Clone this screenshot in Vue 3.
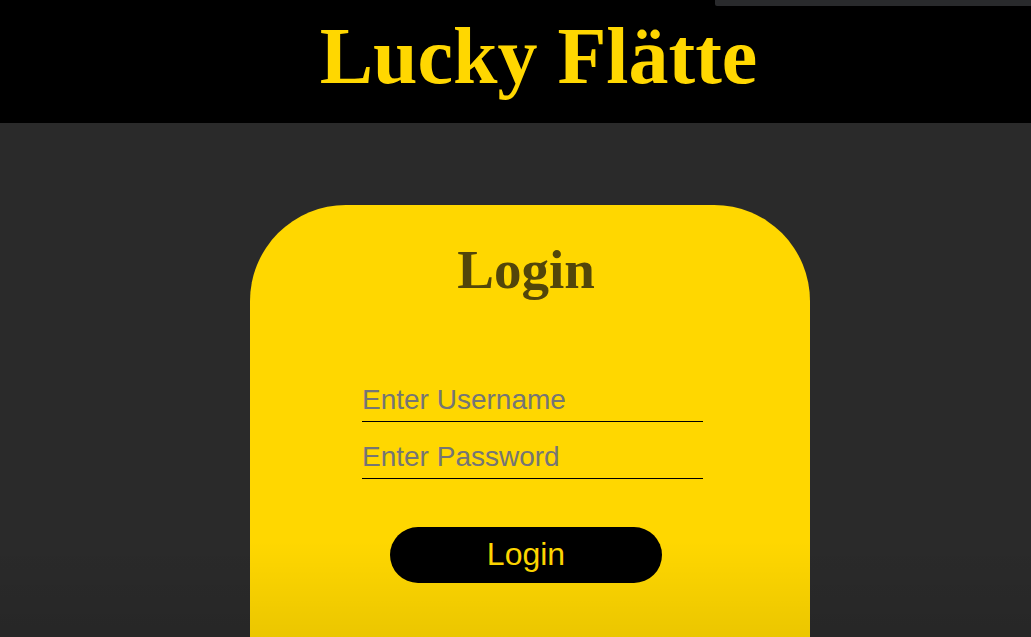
<script setup>
import { ref } from 'vue'

const username = ref('')
const password = ref('')
</script>

<template>
  <div class="page">
    <header class="banner">
      <h1>Lucky Flätte</h1>
      <div class="strip"></div>
    </header>
    <main>
      <form class="card" @submit.prevent>
        <h2>Login</h2>
        <div class="fields">
          <input v-model="username" type="text" placeholder="Enter Username" aria-label="Username" />
          <input v-model="password" type="password" placeholder="Enter Password" aria-label="Password" />
        </div>
        <button type="submit">Login</button>
      </form>
    </main>
    <div class="shade"></div>
  </div>
</template>

<style>
html,
body,
#app {
  height: 100%;
}

body {
  margin: 0;
  overflow: hidden;
  background: #2a2a2a;
}
</style>

<style scoped>
.page {
  position: relative;
  display: flex;
  flex-direction: column;
  height: 100%;
  overflow: hidden;
  background: #2a2a2a;
}

.banner {
  position: relative;
  flex: none;
  box-sizing: border-box;
  padding: 10px 0 21px 46px;
  background: #000;
}

.strip {
  position: absolute;
  top: 0;
  right: 0;
  width: 316px;
  height: 6px;
  background: #292a2c;
  border-bottom-left-radius: 2px;
}

h1,
h2 {
  margin: 0;
  font-family: "Liberation Serif", "Times New Roman", serif;
  font-weight: bold;
  text-align: center;
}

h1 {
  color: #ffd700;
  font-size: 80px;
  line-height: 92px;
}

main {
  display: flex;
  flex: 1;
  justify-content: center;
  padding: 82px 0 0 29px;
}

.card {
  display: flex;
  flex: none;
  flex-direction: column;
  align-items: center;
  box-sizing: border-box;
  width: 560px;
  min-height: 560px;
  padding: 33px 8px 0 0;
  border-radius: 96px;
  background: #ffd700;
}

h2 {
  color: #52460a;
  font-size: 55px;
  line-height: 64px;
}

.fields {
  display: flex;
  flex-direction: column;
  gap: 16px;
  width: 341px;
  margin: 79px 0 48px 13px;
}

input {
  box-sizing: border-box;
  width: 100%;
  height: 41px;
  padding: 0 0 2px;
  border: 0;
  border-bottom: 1px solid #000;
  outline: 0;
  background: transparent;
  color: #000;
  font-family: "Liberation Sans", Arial, sans-serif;
  font-size: 28px;
}

input::placeholder {
  color: #757575;
  opacity: 1;
}

button {
  width: 272px;
  height: 56px;
  padding: 0 0 2px;
  border: 0;
  border-radius: 28px;
  background: #000;
  color: #ffd700;
  font-family: "Liberation Sans", Arial, sans-serif;
  font-size: 32px;
}

.shade {
  position: absolute;
  right: 0;
  bottom: 0;
  left: 0;
  height: 96px;
  background: linear-gradient(to bottom, rgba(0, 0, 0, 0), rgba(0, 0, 0, 0.08));
  pointer-events: none;
}
</style>
